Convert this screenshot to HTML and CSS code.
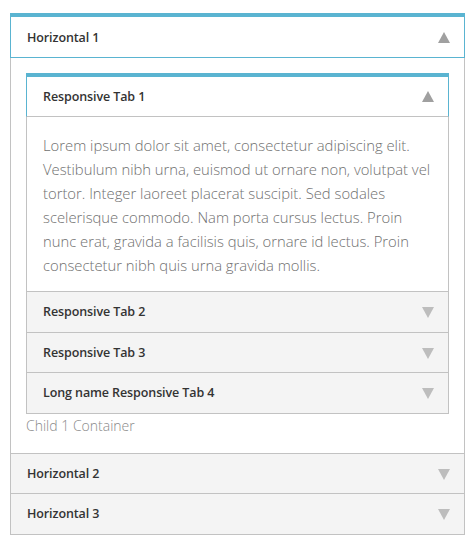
FILE: index.html
```html
<!DOCTYPE html>
<html>
<head>
<meta charset="utf-8">
<link rel="stylesheet" href="styles.css">
</head>
<body>
<div class="accordion">
  <div class="item active">
    <div class="head outer-head"><span class="title">Horizontal 1</span><span class="arrow up"></span></div>
    <div class="body outer-body">
      <div class="inner">
        <div class="item active">
          <div class="head inner-head"><span class="title">Responsive Tab 1</span><span class="arrow up"></span></div>
          <div class="body inner-body">
            <p class="text">Lorem ipsum dolor sit amet, consectetur adipiscing elit. Vestibulum nibh urna, euismod ut ornare non, volutpat vel tortor. Integer laoreet placerat suscipit. Sed sodales scelerisque commodo. Nam porta cursus lectus. Proin nunc erat, gravida a facilisis quis, ornare id lectus. Proin consectetur nibh quis urna gravida mollis.</p>
          </div>
        </div>
        <div class="item">
          <div class="head inner-head"><span class="title">Responsive Tab 2</span><span class="arrow down"></span></div>
        </div>
        <div class="item">
          <div class="head inner-head"><span class="title">Responsive Tab 3</span><span class="arrow down"></span></div>
        </div>
        <div class="item">
          <div class="head inner-head"><span class="title">Long name Responsive Tab 4</span><span class="arrow down"></span></div>
        </div>
      </div>
      <div class="caption">Child 1 Container</div>
    </div>
  </div>
  <div class="item">
    <div class="head outer-head"><span class="title">Horizontal 2</span><span class="arrow down"></span></div>
  </div>
  <div class="item">
    <div class="head outer-head"><span class="title">Horizontal 3</span><span class="arrow down"></span></div>
  </div>
</div>
</body>
</html>
```

FILE: styles.css
```css
html, body {
  margin: 0;
  padding: 0;
  background: #ffffff;
}

body {
  font-family: "Open Sans", "Noto Sans", sans-serif;
  color: #333333;
}

.accordion {
  width: 455px;
  margin: 13px 0 0 10px;
}

.item + .item {
  margin-top: -1px;
}

.head {
  display: flex;
  align-items: center;
  justify-content: space-between;
  box-sizing: border-box;
  border: 1px solid #c2c2c2;
  background: #f4f4f4;
  height: 41.5px;
  padding: 0 14px 0 16px;
}

.title {
  font-size: 12.5px;
  font-weight: 600;
  color: #333333;
  letter-spacing: -0.1px;
}

.item.active > .head {
  background: #ffffff;
  border-color: #5ab4d1;
  border-top-width: 4px;
  height: 45px;
}

.item.active > .inner-head {
  border-bottom-color: #c2c2c2;
  height: 44px;
}

.arrow {
  width: 0;
  height: 0;
  border-left: 6px solid transparent;
  border-right: 6px solid transparent;
}

.arrow.up {
  border-bottom: 11px solid #a0a0a0;
}

.arrow.down {
  border-top: 11px solid #bdbdbd;
  margin-top: 2px;
}

.body {
  border: 1px solid #c2c2c2;
  border-top: none;
  background: #ffffff;
}

.outer-body {
  padding: 15px 15px 16px 15px;
}

.inner-body {
  padding: 16px 16px 14px 16px;
}

.text {
  margin: 0;
  font-size: 14.8px;
  font-weight: 300;
  line-height: 24px;
  color: #6f6f6f;
}

.caption {
  margin-top: 1px;
  font-size: 14px;
  font-weight: 300;
  line-height: 22px;
  color: #8a8a8a;
}
```
